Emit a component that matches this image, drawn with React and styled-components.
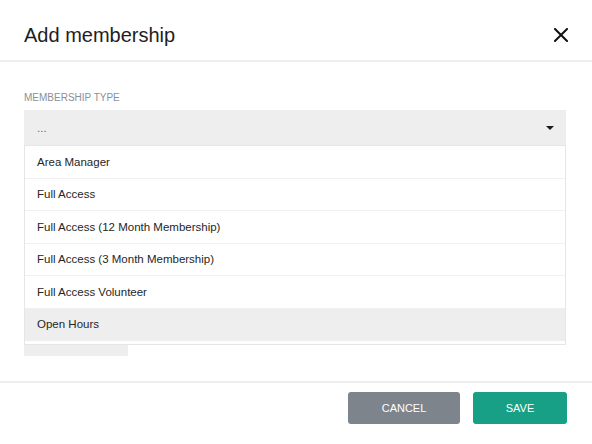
import React from "react";
import styled, { createGlobalStyle } from "styled-components";

const GlobalStyle = createGlobalStyle`
  html, body {
    margin: 0;
    padding: 0;
    background: #ffffff;
  }
  body {
    font-family: "Liberation Sans", Arial, Helvetica, sans-serif;
    color: #222222;
  }
`;

const options = [
  "Area Manager",
  "Full Access",
  "Full Access (12 Month Membership)",
  "Full Access (3 Month Membership)",
  "Full Access Volunteer",
  "Open Hours",
];

const App = () => {
  return (
    <>
      <GlobalStyle />
      <Modal>
        <Header>
          <Title>Add membership</Title>
          <CloseButton aria-label="Close">
            <svg width="14" height="14" viewBox="0 0 14 14">
              <path d="M1 1 L13 13 M13 1 L1 13" stroke="#111" strokeWidth="2" strokeLinecap="square" />
            </svg>
          </CloseButton>
        </Header>

        <Body>
          <Label>Membership type</Label>
          <SelectWrap>
            <Select>
              <span>...</span>
              <Caret />
            </Select>
            <Menu>
              {options.map((opt) => (
                <Option key={opt} active={opt === "Open Hours"}>
                  {opt}
                </Option>
              ))}
            </Menu>
          </SelectWrap>
          <HiddenField />
        </Body>

        <Footer>
          <Button variant="cancel">Cancel</Button>
          <Button variant="save">Save</Button>
        </Footer>
      </Modal>
    </>
  );
};

const Modal = styled.div`
  width: 592px;
  height: 444px;
  overflow: hidden;
  display: flex;
  flex-direction: column;
  background: #fff;
`;

const Header = styled.div`
  height: 62px;
  box-sizing: border-box;
  padding: 24px 24px 0;
  display: flex;
  justify-content: space-between;
  align-items: flex-start;
  border-bottom: 2px solid #eeeeee;
`;

const Title = styled.h1`
  margin: 0;
  font-size: 20px;
  line-height: 23px;
  font-weight: 400;
  color: #1e1e1e;
`;

const CloseButton = styled.button`
  margin-top: 4px;
  padding: 0;
  border: 0;
  background: none;
  width: 14px;
  height: 14px;
  display: flex;
  cursor: pointer;
`;

const Body = styled.div`
  height: 319px;
  box-sizing: border-box;
  padding: 30px 26px 0 24px;
  display: flex;
  flex-direction: column;
`;

const Label = styled.div`
  font-size: 10px;
  line-height: 12px;
  text-transform: uppercase;
  color: #8b9098;
  margin-bottom: 6px;
`;

const SelectWrap = styled.div`
  position: relative;
`;

const Select = styled.div`
  height: 35px;
  box-sizing: border-box;
  background: #eeeeee;
  padding: 0 12px 0 13px;
  display: flex;
  align-items: center;
  justify-content: space-between;
  font-size: 11.5px;
  color: #666;
`;

const Caret = styled.span`
  width: 0;
  height: 0;
  border-left: 4px solid transparent;
  border-right: 4px solid transparent;
  border-top: 4px solid #1a1a1a;
`;

const Menu = styled.div`
  position: absolute;
  top: 100%;
  left: 0;
  right: 0;
  height: 200px;
  box-sizing: border-box;
  overflow: hidden;
  background: #fff;
  border: 1px solid #e6e6e6;
  z-index: 2;
`;

const Option = styled.div`
  height: 32.5px;
  box-sizing: border-box;
  padding: 0 12px;
  display: flex;
  align-items: center;
  font-size: 11.5px;
  color: #262626;
  background: ${(p) => (p.active ? "#eeeeee" : "#ffffff")};
  border-bottom: 1px solid ${(p) => (p.active ? "#eeeeee" : "#f0f0f0")};
`;

const HiddenField = styled.div`
  margin-top: 177px;
  width: 104px;
  height: 34px;
  background: #eeeeee;
`;

const Footer = styled.div`
  flex: 1;
  border-top: 2px solid #eeeeee;
  padding: 9px 25px 0 0;
  display: flex;
  justify-content: flex-end;
  align-items: flex-start;
  gap: 13px;
`;

const Button = styled.button`
  height: 32px;
  width: ${(p) => (p.variant === "cancel" ? "112px" : "94px")};
  border: 0;
  border-radius: 3px;
  background: ${(p) => (p.variant === "cancel" ? "#7e848b" : "#17a085")};
  color: #fff;
  font-family: "Liberation Sans", Arial, sans-serif;
  font-size: 11px;
  text-transform: uppercase;
  cursor: pointer;
`;

export default App;
